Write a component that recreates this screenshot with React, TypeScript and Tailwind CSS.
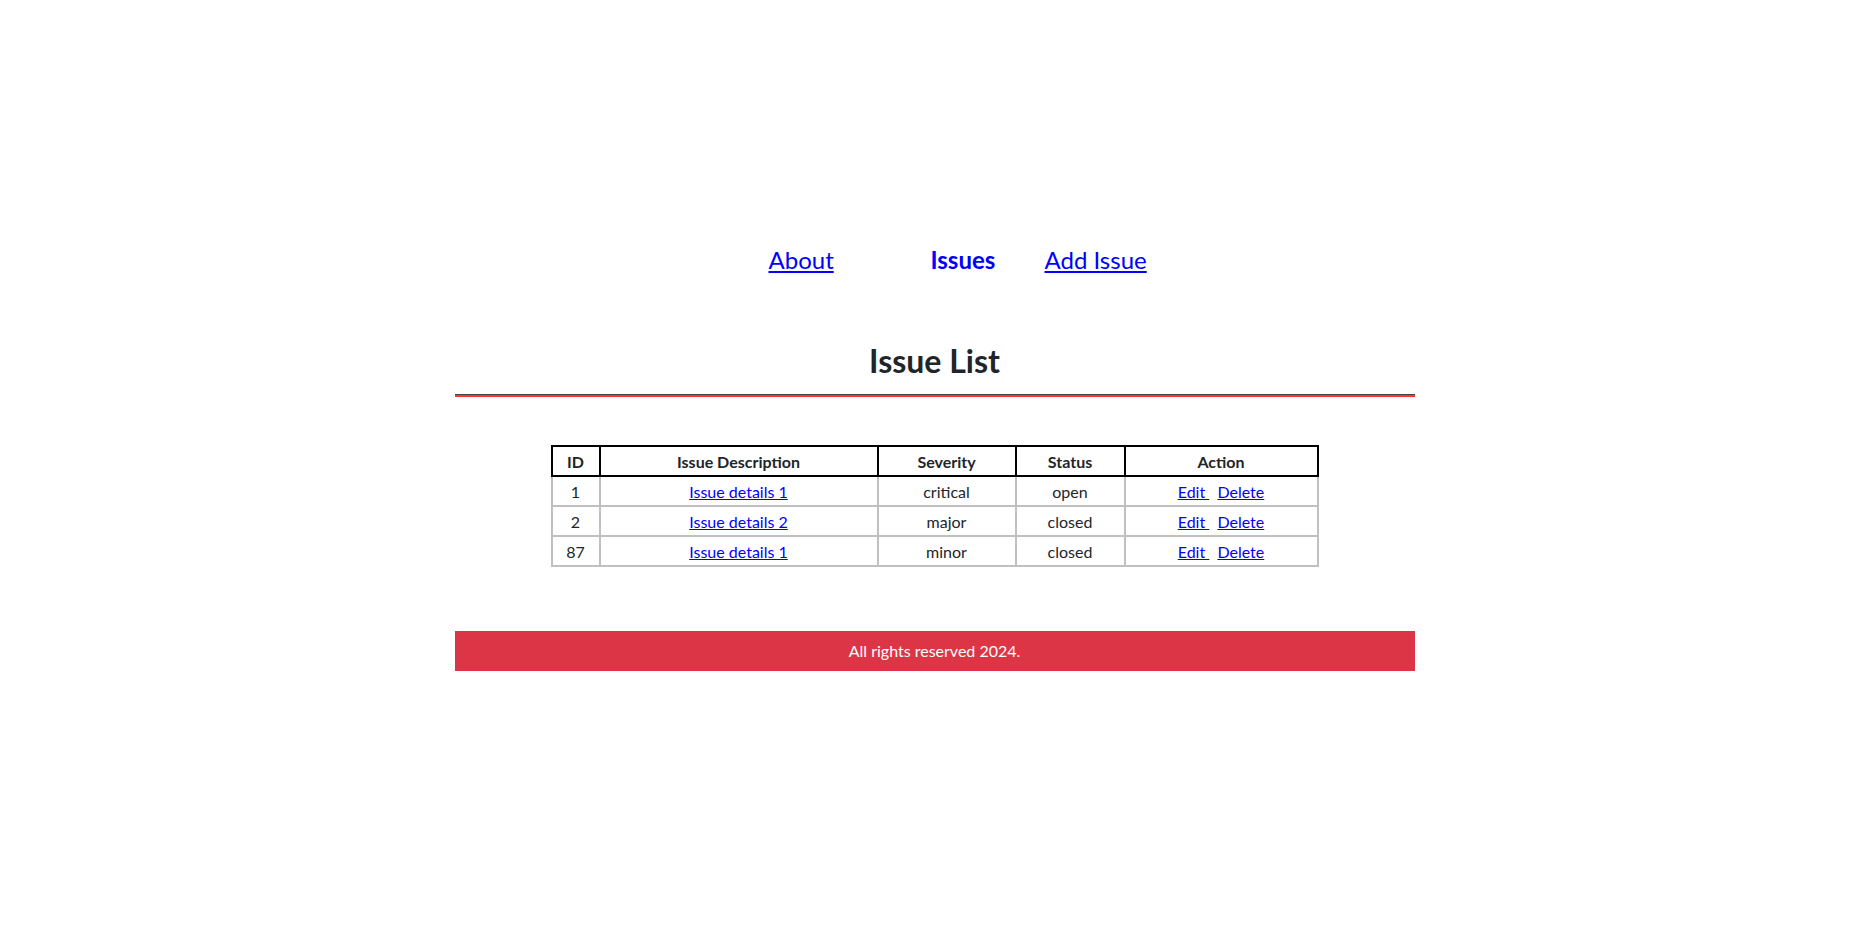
import * as React from 'react';

// ============================================================================
// DATA
// ============================================================================

interface Issue {
  id: number;
  description: string;
  severity: string;
  status: string;
}

const issues: Issue[] = [
  { id: 1, description: 'Issue details 1', severity: 'critical', status: 'open' },
  { id: 2, description: 'Issue details 2', severity: 'major', status: 'closed' },
  { id: 87, description: 'Issue details 1', severity: 'minor', status: 'closed' },
];

const font = 'font-["Segoe_UI",Lato,"Liberation_Sans",sans-serif]';

// ============================================================================
// COMPONENTS
// ============================================================================

function NavBar(): React.JSX.Element {
  return (
    <nav className="flex items-center pl-[314px] text-[24px] leading-9">
      <a href="#" className="w-[162px] text-[#0000ff] underline underline-offset-2">
        About
      </a>
      <a href="#" className="w-[114px] font-bold text-[#0000ff]">
        Issues
      </a>
      <a href="#" className="text-[#0000ff] underline underline-offset-2">
        Add Issue
      </a>
    </nav>
  );
}

function IssueTable(): React.JSX.Element {
  const th = 'border-2 border-black pt-[3px] pb-[1px] font-bold leading-6';
  const td = 'border-2 border-[#c0c0c0] pt-[3px] pb-[1px] leading-6';

  return (
    <table className="mx-auto w-[766px] table-fixed border-collapse text-center text-[16px] text-[#212529]">
      <colgroup>
        <col className="w-[48px]" />
        <col className="w-[278px]" />
        <col className="w-[138px]" />
        <col className="w-[109px]" />
        <col className="w-[193px]" />
      </colgroup>
      <thead>
        <tr>
          <th className={th}>ID</th>
          <th className={th}>Issue Description</th>
          <th className={th}>Severity</th>
          <th className={th}>Status</th>
          <th className={th}>Action</th>
        </tr>
      </thead>
      <tbody>
        {issues.map((issue) => (
          <tr key={issue.id}>
            <td className={td}>{issue.id}</td>
            <td className={td}>
              <a href="#" className="text-[#0000ff] underline">
                {issue.description}
              </a>
            </td>
            <td className={td}>{issue.severity}</td>
            <td className={td}>{issue.status}</td>
            <td className={td}>
              <a href="#" className="text-[#0000ff] underline">
                Edit&nbsp;
              </a>{' '}
              <a href="#" className="ml-[4px] text-[#0000ff] underline">
                Delete
              </a>
            </td>
          </tr>
        ))}
      </tbody>
    </table>
  );
}

export default function App(): React.JSX.Element {
  return (
    <div className={`min-h-[927px] bg-white ${font}`}>
      <div className="mx-auto w-[960px] pt-[242px]">
        <NavBar />

        <h2 className="mt-[64px] text-center text-[32px] leading-[38px] font-bold text-[#212529]">
          Issue List
        </h2>
        <div className="mt-[14px] border-t border-[#444444]" />
        <div className="border-t-2 border-[#ff3333]" />

        <div className="mt-[48px]">
          <IssueTable />
        </div>

        <footer className="mt-[64px] bg-[#dc3545] py-2 text-center text-[16px] leading-6 text-white">
          All rights reserved 2024.
        </footer>
      </div>
    </div>
  );
}
